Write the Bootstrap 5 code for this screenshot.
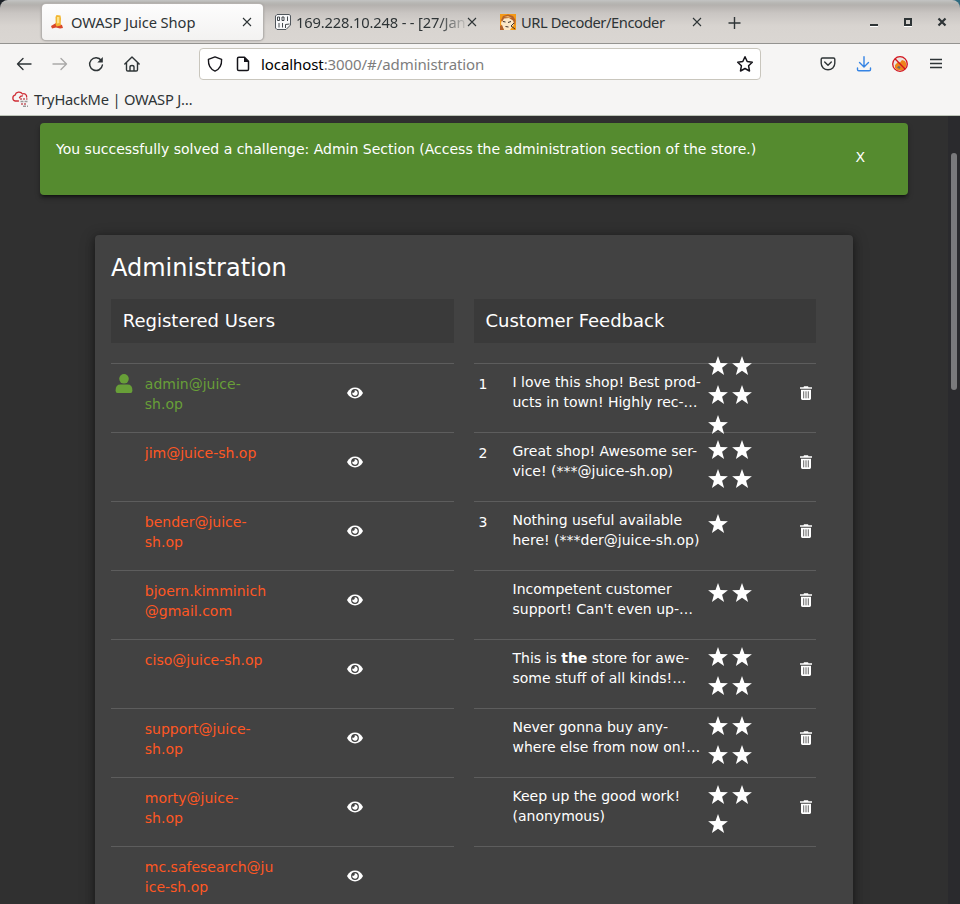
<!DOCTYPE html>
<html lang="en">
<head>
<meta charset="utf-8">
<meta name="viewport" content="width=device-width, initial-scale=1">
<title>OWASP Juice Shop</title>
<link rel="stylesheet" href="https://cdn.jsdelivr.net/npm/bootstrap@5.3.0/dist/css/bootstrap.min.css">
<style>
  html, body { height: 904px; overflow: hidden; }
  body { background: #303030; font-family: "DejaVu Sans", sans-serif; font-size: 14px; line-height: 20px; color: #fff; }
  svg { display: block; flex: none; }

  /* browser chrome */
  .chrome-ui { font-family: "Noto Sans", sans-serif; font-size: 14.7px; color: #2e3436; background: #f6f5f4; }
  .window-edge { background: linear-gradient(90deg, #1d2228 50%, #2f6b80 50%); }
  .tabstrip { height: 44px; padding-left: 42px; border-bottom: 1px solid #949390; border-radius: 8px 8px 0 0;
    background: linear-gradient(#c3c4c3 0, #b7b6b3 3px, #b4b1ae 5px, #c9c5c2 13px, #d8d4d0 26px, #dad6d2 43px); }
  .browser-tab { width: 222px; height: 36px; margin: 4px 3px 0 0; padding: 0 12px 0 8px; border-radius: 4px; }
  .browser-tab.current { width: 221px; margin-right: 4px; padding-right: 11px; background: linear-gradient(#fdfdfd, #f3f2f1); box-shadow: 0 0 0 1px #b5b2af, 0 0 2px 1px #a09d9a; }
  .tab-label { width: 169px; margin-left: 5px; overflow: hidden; white-space: nowrap; letter-spacing: -.08px; }
  .tab-label.tight { letter-spacing: -.43px; }
  .tab-label.faded { letter-spacing: -.16px; -webkit-mask-image: linear-gradient(90deg, #000 142px, transparent 173px); mask-image: linear-gradient(90deg, #000 142px, transparent 173px); }
  .window-buttons { width: 80px; margin: 1px 12px 0 auto; }
  .new-tab { margin: 2px 0 0 10px; }
  .toolbar { height: 40px; padding-left: 15px; }
  .nav-buttons { gap: 18px; }
  .address { width: 562px; height: 32px; margin-left: 58px; padding: 0 6px 0 7px; background: #fff; border: 1px solid #c9c6bd; border-radius: 4px; color: #000; }
  .address-text { margin-left: 5px; font-size: 15px; letter-spacing: -.08px; }
  .address-text span { color: #7d7d7d; }
  .tool-icons { margin-left: 59px; gap: 20px; }
  .bookmarks { height: 32px; padding: 0 0 2px 11px; border-bottom: 1px solid #bdc4b8; }
  .bookmark-label { margin-left: 5px; letter-spacing: -.2px; }

  /* shop page */
  .page { height: 788px; overflow: hidden; }
  .page-body { width: 948px; padding: 7px 40px 0; }
  .scroll-track { width: 12px; padding: 37px 3px 0; background: #2a2a2d; }
  .scroll-thumb { height: 237px; border-radius: 3px; background: #7a7a7c; }
  .challenge { height: 72px; padding: 16px; border-radius: 4px; background: #558b2f; box-shadow: 0 3px 3px -2px rgba(0,0,0,.5), 0 3px 5px rgba(0,0,0,.35); }
  .dismiss { margin: 8px 27px 0 0; }
  .panel { width: 758px; height: 760px; margin: 40px 0 0 55px; padding: 17px 16px 0; border-radius: 4px; background: #424242; box-shadow: 0 2px 8px rgba(0,0,0,.4), 0 4px 16px rgba(0,0,0,.25); }
  .panel h1 { font-size: 24px; line-height: 32px; margin: 0 0 15px; font-weight: 400; }
  .columns { gap: 20px; }
  .users { width: 343px; }
  .feedback { width: 342px; }
  .section-title { height: 44px; padding: 0 11.8px; margin-bottom: 20px; background: #3a3a3a; font-size: 18px; font-weight: 400; line-height: 44px; }
  .feedback .section-title { padding-left: 11.5px; }
  .entry { height: 69px; border-top: 1px solid #5d5d5d; }
  .avatar-cell { width: 33.8px; padding: 10px 0 0 4px; }
  .mail { width: 201.2px; padding-top: 10px; color: #ff5722; white-space: nowrap; }
  .mail.online { color: #689f38; }
  .eye { margin-top: 20px; }
  .uid { width: 38.5px; padding: 10px 0 0 4.4px; }
  .comment { width: 193.5px; padding-top: 8px; white-space: nowrap; }
  .rating { width: 48px; }
  .rating svg { margin-bottom: 5.3px; }
  .rate-1 { padding-top: 10px; }
  .rate-2 { padding-top: 5px; }
  .rate-3 { margin-top: -10px; }
  .bin { margin: 20px 0 0 auto; }
</style>
</head>
<body>
<svg width="0" height="0" class="position-absolute">
  <symbol id="star" viewBox="0 0 24 24"><path fill="#fff" d="M12 2l2.500 6.900 7.400.3-5.800 4.600 2 7.100-6.100-4.100-6.100 4.100 2-7.100L2.100 9.200l7.400-.3z"/></symbol>
  <symbol id="eye" viewBox="0 0 16 18"><path fill="#fff" d="M0 9C2 5.300 4.700 3.600 8 3.600S14 5.300 16 9c-2 3.700-4.700 5.400-8 5.400S2 12.700 0 9z"/><circle cx="8" cy="9" r="3.900" fill="#424242"/><path fill="#fff" d="M7.600 6.300A2.700 2.700 0 1 1 5.300 8.600a1.700 1.700 0 0 0 2.300-2.300z"/></symbol>
  <symbol id="bin" viewBox="0 0 12 18"><path fill="#fff" d="M0 3.200h3.500L4 2.200h4l.5 1H12v1.600H0zM1 5.800h10v8.800q0 1.400-1.400 1.400H2.400Q1 16 1 14.600z"/><path stroke="#555" stroke-width=".9" d="M3.700 7.300v7M6 7.300v7M8.300 7.300v7"/></symbol>
  <symbol id="close" viewBox="0 0 10 10"><path fill="none" stroke="#2e3436" stroke-width="1.100" d="M1 1l8 8M9 1L1 9"/></symbol>
</svg>

<header class="chrome-ui">
  <div class="window-edge">
  <div class="tabstrip d-flex">
    <div class="browser-tab current d-flex align-items-center">
      <svg width="16" height="16" viewBox="0 0 16 16"><path fill="#d9472b" d="M1 12l5-3 6 2 1 3-3 .5-4-1-4 1z"/><path fill="#f2b632" d="M5.500 3l1-2 4 .5.5 3-.3 7-4.200 1-.8-2z"/><path fill="#fbe48b" d="M7 3h2.300v6L7 9.500z"/></svg>
      <div class="tab-label">OWASP Juice Shop</div>
      <svg class="ms-auto" width="10" height="10"><use href="#close"/></svg>
    </div>
    <div class="browser-tab d-flex align-items-center">
      <svg width="16" height="16" viewBox="0 0 16 16"><path fill="#f7f8fa" stroke="#50565c" d="M2 .5h12l1.500 1V11L11 15.500H2L.500 14V2z"/><path fill="none" stroke="#30363b" stroke-width=".9" d="M2.500 3h2v3.500h-2zM7 3h2v3.500H7zM12.500 2.500V7M4 9v4.500M7.500 9v4.500M10.500 14v-3.500l4-.5"/></svg>
      <div class="tab-label faded">169.228.10.248 - - [27/Jan</div>
      <svg class="ms-auto" width="10" height="10"><use href="#close"/></svg>
    </div>
    <div class="browser-tab d-flex align-items-center">
      <svg width="16" height="16" viewBox="0 0 16 16"><path fill="#f59a17" d="M0 0h16v16H0z"/><path fill="#fbe8c8" d="M2 4l7-2 5 4-.5 5L10 16H4L1 10z"/><path fill="#b5622a" d="M1 6l2-4 5-1.500 5 1.500 2.500 4-.5 5-2-4.500L9 4 4 4.500 2 8zM0 12l2-1 2 5H0z"/><path fill="#efbd74" d="M4 3l4-1 4 2-4-.5z"/><path fill="none" stroke="#3c302d" d="M3 7.500l2.500.5M8 8.500l3-1M5.500 12.500l3 .5M14 9l-3 3 4 3"/></svg>
      <div class="tab-label tight">URL Decoder/Encoder</div>
      <svg class="ms-auto" width="10" height="10"><use href="#close"/></svg>
    </div>
    <svg class="new-tab align-self-center" width="18" height="14" viewBox="-2 0 18 14"><path stroke="#2e3436" stroke-width="1.400" d="M5.500 1v12M-.5 7h12"/></svg>
    <div class="window-buttons d-flex justify-content-between align-items-center">
      <svg width="12" height="12" viewBox="0 0 12 12"><path fill="#fff" d="M2 10h8v1H2z"/><path fill="#2e3436" d="M2 8h8v2H2z"/></svg>
      <svg width="12" height="12" viewBox="0 0 12 12"><path stroke="#fff" d="M2 10.500h8"/><path fill="none" stroke="#2e3436" stroke-width="2" d="M3 3h6v6H3z"/></svg>
      <svg width="12" height="12" viewBox="0 0 12 12"><path stroke="#2e3436" stroke-width="2.200" d="M2.500 2.500l7 7M9.500 2.500l-7 7"/></svg>
    </div>
  </div>
  </div>

  <div class="toolbar d-flex align-items-center">
    <div class="nav-buttons d-flex">
      <svg width="18" height="18" viewBox="0 0 18 18"><path fill="none" stroke="#2e3436" stroke-width="1.400" stroke-linecap="round" stroke-linejoin="round" d="M16 9H2.500M8 3.500L2.500 9 8 14.500"/></svg>
      <svg width="18" height="18" viewBox="0 0 18 18"><path fill="none" stroke="#aaa9a8" stroke-width="1.400" stroke-linecap="round" stroke-linejoin="round" d="M2 9h13.500M10 3.500L15.500 9 10 14.500"/></svg>
      <svg width="18" height="18" viewBox="0 0 18 18"><path fill="none" stroke="#2e3436" stroke-width="1.500" stroke-linecap="round" d="M14.300 5.500A6.400 6.400 0 1 0 15.400 10"/><path fill="#2e3436" d="M15.800 2v5.500h-5.500z"/></svg>
      <svg width="18" height="18" viewBox="0 0 18 18"><path fill="none" stroke="#2e3436" stroke-width="1.400" stroke-linecap="round" stroke-linejoin="round" d="M1.800 9L9 2l7.200 7M3.500 7.500v7.200q0 1.300 1.300 1.300h8.400q1.300 0 1.300-1.300V7.500M7 16v-4q0-1.500 2-1.500t2 1.500v4"/></svg>
    </div>
    <div class="address d-flex align-items-center">
      <svg width="16" height="16" viewBox="0 0 16 16"><path fill="none" stroke="#15141a" stroke-width="1.400" stroke-linejoin="round" d="M8 .9l6.600 2.500c.2 5-1.800 9.800-6.600 11.700C3.200 13.200 1.200 8.400 1.400 3.400z"/></svg>
      <svg class="ms-2 me-1" width="21" height="16" viewBox="-5 0 21 16"><path fill="none" stroke="#15141a" stroke-width="1.500" stroke-linejoin="round" d="M2.800 1.300h5.700l4 4v8q0 1.300-1.300 1.300H2.800q-1.300 0-1.300-1.300V2.600q0-1.300 1.300-1.300z"/><path fill="#15141a" d="M8 1l5 5H8z"/></svg>
      <div class="address-text">localhost<span>:3000/#/administration</span></div>
      <svg class="ms-auto" width="18" height="18" viewBox="0 0 18 18"><path fill="none" stroke="#15141a" stroke-width="1.500" stroke-linejoin="round" d="M9 1.800l2.200 4.700 5.100.7-3.700 3.600.9 5.200L9 13.500 4.500 16l.9-5.200-3.700-3.600 5.100-.7z"/></svg>
    </div>
    <div class="tool-icons d-flex">
      <svg width="16" height="16" viewBox="0 0 16 16"><path fill="none" stroke="#2e3436" stroke-width="1.400" stroke-linecap="round" stroke-linejoin="round" d="M2.500 2h11q1.300 0 1.300 1.300v4a6.800 6.500 0 0 1-13.600 0v-4Q1.200 2 2.500 2zM4.700 6L8 9.200 11.300 6"/></svg>
      <svg width="16" height="16" viewBox="0 0 16 16"><path fill="none" stroke="#3584e4" stroke-width="1.400" stroke-linecap="round" stroke-linejoin="round" d="M8 .7v10M3.500 6.500L8 11l4.500-4.500M1.500 12v1.500q0 1.300 1.300 1.300h10.400q1.300 0 1.300-1.300V12"/></svg>
      <svg width="16" height="16" viewBox="0 0 16 16"><circle cx="8" cy="8" r="7.300" fill="#e9e4df"/><path fill="#ee8419" d="M3 9l3-3 2 .5L10 4l3 1 1.500 3-1 4-3 2.500-5-.5L3 12z"/><path fill="#6d6a68" d="M5 11.500q2-3 3.500 0l-1 1.500z"/><path fill="none" stroke="#d3141d" stroke-width="1.300" d="M3 2.800L13 13"/><circle cx="8" cy="8" r="7.300" fill="none" stroke="#d3141d" stroke-width="1.300"/></svg>
      <svg width="16" height="16" viewBox="0 0 16 16"><path stroke="#2e3436" stroke-width="1.300" d="M2 3.500h12M2 7.500h12M2 11.500h12"/></svg>
    </div>
  </div>

  <div class="bookmarks d-flex align-items-center">
    <svg width="18" height="18" viewBox="0 0 18 18"><path fill="none" stroke="#d02c34" stroke-width="1.300" stroke-linecap="round" d="M7.500 11H4.200A3 3 0 0 1 4 5.200 4.200 4.200 0 0 1 11.500 4a3 3 0 0 1 4.200 3M8.500 7.800a3 3 0 0 1 3-2"/><path stroke="#c45b61" stroke-width="1.500" stroke-dasharray="2 1" d="M9 9h7.500M10 14h6"/><path stroke="#999" stroke-width="1.500" stroke-dasharray="3 1" d="M9.500 11.500H17M12 16.300h5"/></svg>
    <div class="bookmark-label">TryHackMe | OWASP J…</div>
  </div>
</header>

<main class="page d-flex">
  <div class="page-body">
    <div class="challenge d-flex justify-content-between align-items-start">
      <div>You successfully solved a challenge: Admin Section (Access the administration section of the store.)</div>
      <div class="dismiss">X</div>
    </div>

    <div class="panel">
      <h1>Administration</h1>
      <div class="columns d-flex">
        <section class="users">
          <h2 class="section-title">Registered Users</h2>
          <div class="entry d-flex"><div class="avatar-cell"><svg width="18" height="20" viewBox="0 0 18 20"><circle cx="9" cy="4.800" r="4.800" fill="#689f38"/><path fill="#689f38" d="M.6 16.500Q.6 10.600 5.500 10.600h7q4.900 0 4.900 5.900 0 2.500-1.800 2.500H2.400Q.6 19 .6 16.500z"/></svg></div><div class="mail online">admin@juice-<br>sh.op</div><svg class="eye" width="18" height="18"><use href="#eye"/></svg></div>
          <div class="entry d-flex"><div class="avatar-cell"></div><div class="mail">jim@juice-sh.op</div><svg class="eye" width="18" height="18"><use href="#eye"/></svg></div>
          <div class="entry d-flex"><div class="avatar-cell"></div><div class="mail">bender@juice-<br>sh.op</div><svg class="eye" width="18" height="18"><use href="#eye"/></svg></div>
          <div class="entry d-flex"><div class="avatar-cell"></div><div class="mail">bjoern.kimminich<br>@gmail.com</div><svg class="eye" width="18" height="18"><use href="#eye"/></svg></div>
          <div class="entry d-flex"><div class="avatar-cell"></div><div class="mail">ciso@juice-sh.op</div><svg class="eye" width="18" height="18"><use href="#eye"/></svg></div>
          <div class="entry d-flex"><div class="avatar-cell"></div><div class="mail">support@juice-<br>sh.op</div><svg class="eye" width="18" height="18"><use href="#eye"/></svg></div>
          <div class="entry d-flex"><div class="avatar-cell"></div><div class="mail">morty@juice-<br>sh.op</div><svg class="eye" width="18" height="18"><use href="#eye"/></svg></div>
          <div class="entry d-flex"><div class="avatar-cell"></div><div class="mail">mc.safesearch@ju<br>ice-sh.op</div><svg class="eye" width="18" height="18"><use href="#eye"/></svg></div>
        </section>

        <section class="feedback">
          <h2 class="section-title">Customer Feedback</h2>
          <div class="entry d-flex"><div class="uid">1</div><div class="comment">I love this shop! Best prod-<br>ucts in town! Highly rec-…</div>
            <div class="rating rate-3 d-flex flex-wrap align-content-start"><svg width="24" height="24"><use href="#star"/></svg><svg width="24" height="24"><use href="#star"/></svg><svg width="24" height="24"><use href="#star"/></svg><svg width="24" height="24"><use href="#star"/></svg><svg width="24" height="24"><use href="#star"/></svg></div>
            <svg class="bin" width="20" height="18"><use href="#bin"/></svg></div>
          <div class="entry d-flex"><div class="uid">2</div><div class="comment">Great shop! Awesome ser-<br>vice! (***@juice-sh.op)</div>
            <div class="rating rate-2 d-flex flex-wrap align-content-start"><svg width="24" height="24"><use href="#star"/></svg><svg width="24" height="24"><use href="#star"/></svg><svg width="24" height="24"><use href="#star"/></svg><svg width="24" height="24"><use href="#star"/></svg></div>
            <svg class="bin" width="20" height="18"><use href="#bin"/></svg></div>
          <div class="entry d-flex"><div class="uid">3</div><div class="comment">Nothing useful available<br>here! (***der@juice-sh.op)</div>
            <div class="rating rate-1 d-flex flex-wrap align-content-start"><svg width="24" height="24"><use href="#star"/></svg></div>
            <svg class="bin" width="20" height="18"><use href="#bin"/></svg></div>
          <div class="entry d-flex"><div class="uid"></div><div class="comment">Incompetent customer<br>support! Can't even up-…</div>
            <div class="rating rate-1 d-flex flex-wrap align-content-start"><svg width="24" height="24"><use href="#star"/></svg><svg width="24" height="24"><use href="#star"/></svg></div>
            <svg class="bin" width="20" height="18"><use href="#bin"/></svg></div>
          <div class="entry d-flex"><div class="uid"></div><div class="comment">This is <b>the</b> store for awe-<br>some stuff of all kinds!…</div>
            <div class="rating rate-2 d-flex flex-wrap align-content-start"><svg width="24" height="24"><use href="#star"/></svg><svg width="24" height="24"><use href="#star"/></svg><svg width="24" height="24"><use href="#star"/></svg><svg width="24" height="24"><use href="#star"/></svg></div>
            <svg class="bin" width="20" height="18"><use href="#bin"/></svg></div>
          <div class="entry d-flex"><div class="uid"></div><div class="comment">Never gonna buy any-<br>where else from now on!…</div>
            <div class="rating rate-2 d-flex flex-wrap align-content-start"><svg width="24" height="24"><use href="#star"/></svg><svg width="24" height="24"><use href="#star"/></svg><svg width="24" height="24"><use href="#star"/></svg><svg width="24" height="24"><use href="#star"/></svg></div>
            <svg class="bin" width="20" height="18"><use href="#bin"/></svg></div>
          <div class="entry d-flex"><div class="uid"></div><div class="comment">Keep up the good work!<br>(anonymous)</div>
            <div class="rating rate-2 d-flex flex-wrap align-content-start"><svg width="24" height="24"><use href="#star"/></svg><svg width="24" height="24"><use href="#star"/></svg><svg width="24" height="24"><use href="#star"/></svg></div>
            <svg class="bin" width="20" height="18"><use href="#bin"/></svg></div>
          <div class="entry"></div>
        </section>
      </div>
    </div>
  </div>
  <div class="scroll-track"><div class="scroll-thumb"></div></div>
</main>
<script src="https://cdn.jsdelivr.net/npm/bootstrap@5.3.0/dist/js/bootstrap.bundle.min.js"></script>
</body>
</html>
